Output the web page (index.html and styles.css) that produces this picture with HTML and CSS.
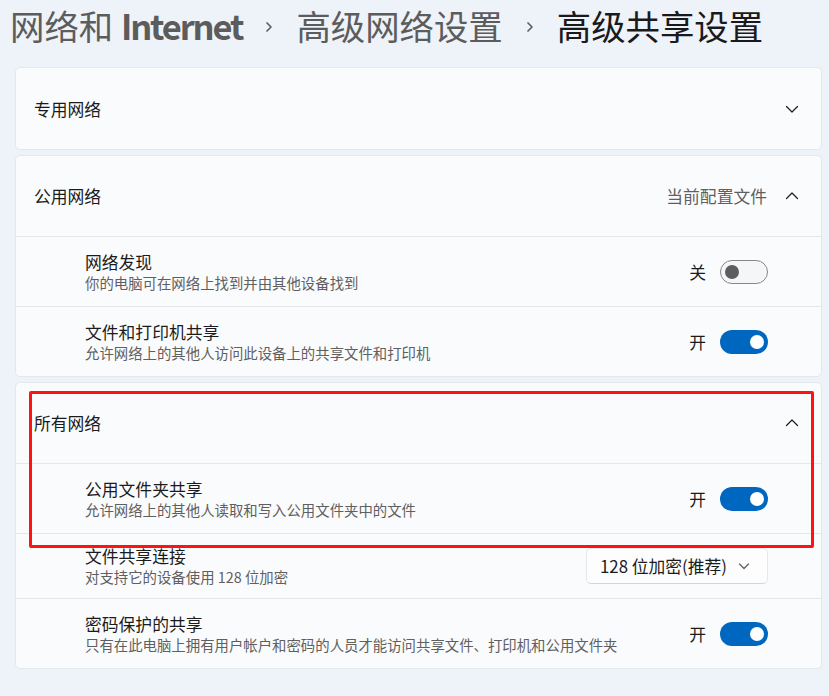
FILE: index.html
```html
<!DOCTYPE html>
<html lang="zh-CN">
<head>
<meta charset="utf-8">
<title>高级共享设置</title>
<link rel="stylesheet" href="styles.css">
</head>
<body>
<div class="page">
  <header class="crumbs">
    <span class="crumb">网络和 <span class="latin">Internet</span></span>
    <svg class="sep" width="10" height="16" viewBox="0 0 10 16"><path d="M3 4 L7 8 L3 12" fill="none" stroke="#5f5f5f" stroke-width="1.7" stroke-linecap="round" stroke-linejoin="round"/></svg>
    <span class="crumb">高级网络设置</span>
    <svg class="sep" width="10" height="16" viewBox="0 0 10 16"><path d="M3 4 L7 8 L3 12" fill="none" stroke="#5f5f5f" stroke-width="1.7" stroke-linecap="round" stroke-linejoin="round"/></svg>
    <span class="crumb current">高级共享设置</span>
  </header>

  <section class="card first">
    <div class="head">
      <span class="head-title">专用网络</span>
      <svg class="chev" width="14" height="14" viewBox="0 0 14 14"><path d="M1.5 4.5 L7 10 L12.5 4.5" fill="none" stroke="#1b1b1b" stroke-width="1.2" stroke-linecap="round" stroke-linejoin="round"/></svg>
    </div>
  </section>

  <section class="card">
    <div class="head">
      <span class="head-title">公用网络</span>
      <span class="head-meta">当前配置文件</span>
      <svg class="chev" width="14" height="14" viewBox="0 0 14 14"><path d="M1.5 9.5 L7 4 L12.5 9.5" fill="none" stroke="#1b1b1b" stroke-width="1.2" stroke-linecap="round" stroke-linejoin="round"/></svg>
    </div>
    <div class="row">
      <div class="text">
        <div class="r-title">网络发现</div>
        <div class="r-sub">你的电脑可在网络上找到并由其他设备找到</div>
      </div>
      <span class="state">关</span>
      <span class="toggle off"><span class="knob"></span></span>
    </div>
    <div class="row">
      <div class="text">
        <div class="r-title">文件和打印机共享</div>
        <div class="r-sub">允许网络上的其他人访问此设备上的共享文件和打印机</div>
      </div>
      <span class="state">开</span>
      <span class="toggle on"><span class="knob"></span></span>
    </div>
  </section>

  <section class="card all">
    <div class="head">
      <span class="head-title">所有网络</span>
      <svg class="chev" width="14" height="14" viewBox="0 0 14 14"><path d="M1.5 9.5 L7 4 L12.5 9.5" fill="none" stroke="#1b1b1b" stroke-width="1.2" stroke-linecap="round" stroke-linejoin="round"/></svg>
    </div>
    <div class="row">
      <div class="text">
        <div class="r-title">公用文件夹共享</div>
        <div class="r-sub">允许网络上的其他人读取和写入公用文件夹中的文件</div>
      </div>
      <span class="state">开</span>
      <span class="toggle on"><span class="knob"></span></span>
    </div>
    <div class="row short">
      <div class="text">
        <div class="r-title">文件共享连接</div>
        <div class="r-sub">对支持它的设备使用 128 位加密</div>
      </div>
      <span class="select">
        <span class="select-text">128 位加密(推荐)</span>
        <svg width="12" height="12" viewBox="0 0 12 12"><path d="M1.5 4 L6 8.5 L10.5 4" fill="none" stroke="#5f5f5f" stroke-width="1.2" stroke-linecap="round" stroke-linejoin="round"/></svg>
      </span>
    </div>
    <div class="row">
      <div class="text">
        <div class="r-title">密码保护的共享</div>
        <div class="r-sub">只有在此电脑上拥有用户帐户和密码的人员才能访问共享文件、打印机和公用文件夹</div>
      </div>
      <span class="state">开</span>
      <span class="toggle on"><span class="knob"></span></span>
    </div>
    <div class="highlight"></div>
  </section>
</div>
</body>
</html>
```

FILE: styles.css
```css
* { box-sizing: border-box; }

html, body {
  margin: 0;
  padding: 0;
  background: #eef2f9;
}

body {
  font-family: "Noto Sans CJK SC", "Noto Sans", sans-serif;
  color: #1b1b1b;
  width: 829px;
  height: 696px;
  overflow: hidden;
}

.page {
  padding: 0 7px 0 15px;
}

.crumbs {
  display: flex;
  align-items: center;
  gap: 22px;
  height: 50px;
  margin: 0 0 17px -5px;
  font-size: 34.4px;
  line-height: 50px;
  white-space: nowrap;
}

.crumb { color: #5c5c5c; }
.crumb .latin { font-weight: 600; letter-spacing: -2.1px; }
.crumb.current { color: #1a1a1a; }
.sep { flex: none; margin-top: 4px; }

.card {
  position: relative;
  background: #fafbfd;
  border: 1px solid #e4e7ec;
  border-radius: 5px;
  margin-bottom: 5px;
}

.card.first { margin-bottom: 5px; }
.card.first .head { height: 81px; }

.head {
  display: flex;
  align-items: center;
  height: 80px;
  padding: 0 22px 0 18px;
  font-size: 16.8px;
}

.head-title { flex: 1; }

.head-meta {
  color: #5f5f5f;
  margin-right: 18px;
}

.chev { flex: none; }

.row {
  display: flex;
  align-items: center;
  height: 70px;
  padding: 0 53px 0 69px;
  border-top: 1px solid #e4e7ec;
}

.row.short { height: 65px; }

.text { flex: 1; padding-top: 2px; }

.row.short .text { padding-top: 0; }

.r-title {
  font-size: 16.8px;
  line-height: 21px;
  color: #1b1b1b;
}

.r-sub {
  font-size: 14.4px;
  line-height: 20px;
  color: #5f5f5f;
}

.state {
  font-size: 16.8px;
  margin-right: 14px;
}

.toggle {
  position: relative;
  flex: none;
  width: 48px;
  height: 24px;
  border-radius: 12px;
}

.toggle.on { background: #0067c0; }

.toggle.off {
  background: #f5f6f7;
  border: 1px solid #878787;
}

.knob {
  position: absolute;
  top: 5px;
  width: 14px;
  height: 14px;
  border-radius: 50%;
}

.toggle.on .knob { right: 4px; background: #ffffff; }
.toggle.off .knob { left: 4px; top: 4px; background: #5d5d5d; }

.select {
  display: flex;
  align-items: center;
  justify-content: space-between;
  width: 182px;
  height: 36px;
  padding: 0 17px 0 13px;
  background: #fdfdfe;
  border: 1px solid #e6e7ea;
  border-bottom-color: #d4d6da;
  border-radius: 5px;
  font-size: 16.8px;
  color: #1b1b1b;
}

.highlight {
  position: absolute;
  left: 13px;
  top: 8px;
  width: 785px;
  height: 157px;
  border: 3px solid #ff1212;
  border-radius: 2px;
  pointer-events: none;
}
```
